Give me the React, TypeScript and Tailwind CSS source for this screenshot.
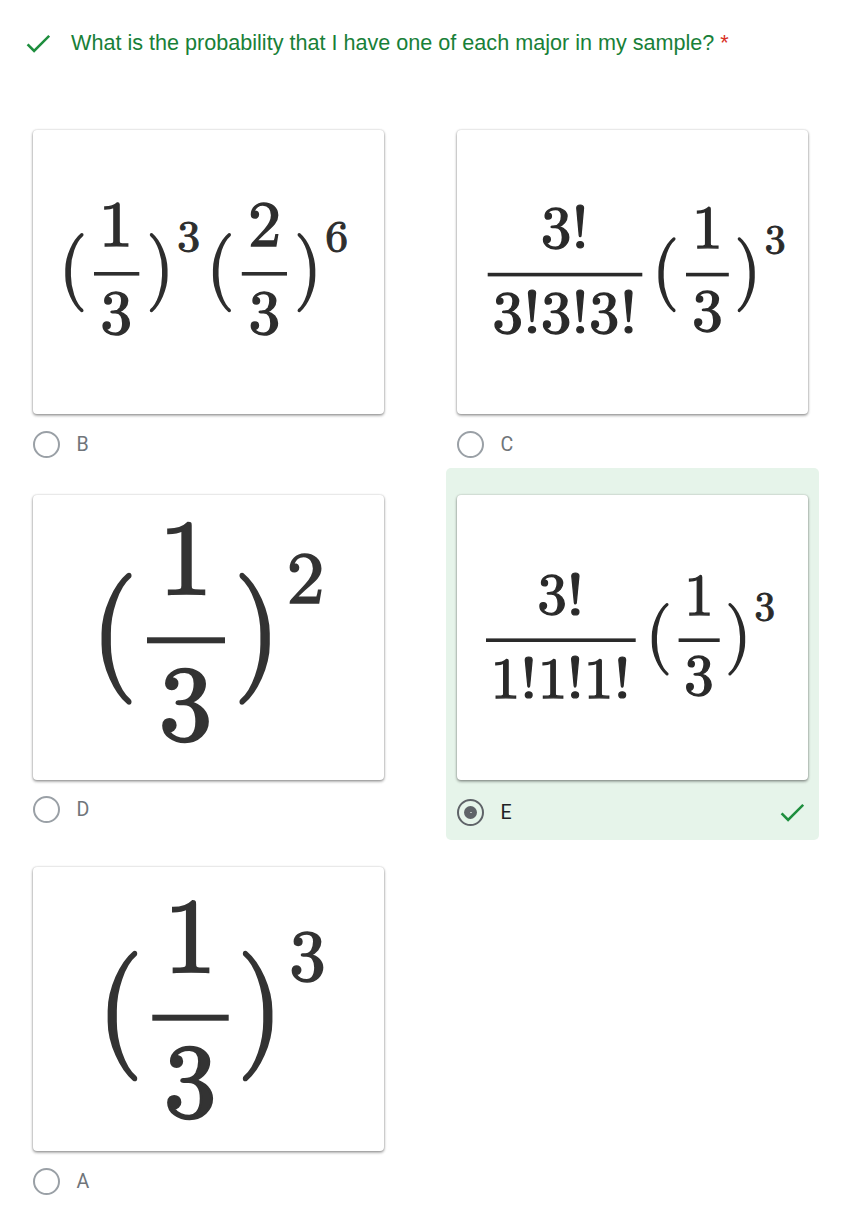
import React from "react";

type Metrics = [number, number, number, number];
type Mark = [string, number, number, number, number];

// Ink bounds of each character at a font size of 1000: left, descent, right, ascent.
const INK: Record<string, Metrics> = {
  "1": [87, 0, 421, 666],
  "2": [50, 0, 449, 666],
  "3": [42, -22, 457, 666],
  "6": [42, -22, 456, 666],
  "!": [84, 0, 194, 716],
  "(": [99, -249, 332, 749],
  ")": [56, -249, 289, 749],
};

// Outline weight of each character, as a share of its height.
const STROKE: Record<string, number> = { "1": 0.032, "2": 0.034, "3": 0.034, "6": 0.034, "!": 0.028, "(": 0.024, ")": 0.024 };

function Glyph({ mark, color }: { mark: Mark; color: string }) {
  const [ch, x0, y0, x1, y1] = mark;
  const [l, b, r, t] = INK[ch];
  const sw = (y1 - y0) * STROKE[ch];
  const sx = (x1 - x0 - sw) / (r - l);
  const sy = (y1 - y0 - sw) / (t - b);
  const tx = x0 + sw / 2 - l * sx;
  const ty = y0 + sw / 2 + t * sy;
  return (
    <text
      transform={`translate(${tx} ${ty}) scale(${sx * 10} ${sy * 10})`}
      fontSize={100}
      fill={color}
      stroke={color}
      strokeWidth={sw}
      vectorEffect="non-scaling-stroke"
    >
      {ch}
    </text>
  );
}

function Formula({ box, marks, color }: { box: string; marks: Mark[]; color: string }) {
  return (
    <svg viewBox={box} className="block h-full w-full font-['Latin_Modern_Math','Liberation_Serif',serif]">
      {marks.map((m, i) =>
        m[0] === "bar" ? (
          <rect key={i} x={m[1]} y={m[2]} width={m[3] - m[1]} height={m[4] - m[2]} fill={color} />
        ) : (
          <Glyph key={i} mark={m} color={color} />
        ),
      )}
    </svg>
  );
}

function Check() {
  return (
    <svg viewBox="0 0 24 19" className="block h-[19px] w-6 shrink-0">
      <path d="M1.6 10.3 L8.1 16.8 L23.2 1.8" fill="none" stroke="#1e8e3e" strokeWidth="2.6" />
    </svg>
  );
}

function Radio({ selected }: { selected?: boolean }) {
  return (
    <span
      className={
        selected
          ? "flex size-[27px] items-center justify-center rounded-full border-2 border-[#5f6368]"
          : "flex size-[27px] items-center justify-center rounded-full border-2 border-[#9aa0a6]"
      }
    >
      {selected && (
        <span className="flex size-[13px] items-center justify-center rounded-full bg-[#5f6368]">
          <span className="h-px w-0.5 bg-[#b4bbb9]" />
        </span>
      )}
    </span>
  );
}

interface OptionProps {
  label: string;
  box: string;
  marks: Mark[];
  color: string;
  tall?: boolean;
  selected?: boolean;
}

function Option({ label, box, marks, color, tall, selected }: OptionProps) {
  return (
    <div className={selected ? "rounded-[5px] bg-[#e6f4ea] px-[11px] pt-[27px]" : "px-[11px] pt-[27px]"}>
      <div
        className={
          (tall ? "h-[285px]" : "h-[284px]") +
          " w-[351px] rounded-[4px] bg-white shadow-[0_1px_3px_0_rgba(0,0,0,0.32),0_0_2px_0_rgba(0,0,0,0.16),0_2px_3px_0_rgba(0,0,0,0.16)]"
        }
      >
        <Formula box={box} marks={marks} color={color} />
      </div>
      <div className={selected ? "flex items-center pt-[19px]" : tall ? "flex items-center pt-4" : "flex items-center pt-[17px]"}>
        <Radio selected={selected} />
        <span
          className={
            selected
              ? "ml-[16.5px] grow font-[Roboto,sans-serif] text-[19.6px] leading-[27px] text-[#202124]"
              : "ml-[16.5px] grow font-[Roboto,sans-serif] text-[19.6px] leading-[27px] text-[#70757a]"
          }
        >
          {label}
        </span>
        {selected && (
          <span className="mr-1">
            <Check />
          </span>
        )}
      </div>
    </div>
  );
}

const OPTIONS: OptionProps[] = [
  {
    label: "B",
    box: "33 130 351 284",
    color: "#2e2e2e",
    marks: [
      ["(", 65, 233.3, 83.5, 312.7],
      ["1", 104, 202.3, 128.5, 247],
      ["bar", 94, 272, 139.3, 275.6],
      ["3", 102.3, 291, 130, 336.3],
      [")", 149.7, 233.3, 167.7, 312.7],
      ["3", 178.7, 221, 198.7, 252.3],
      ["(", 212.7, 233.3, 231, 312.7],
      ["2", 250.7, 202.3, 278.3, 247],
      ["bar", 241.8, 272, 287, 275.6],
      ["3", 250.7, 291, 278.3, 336.3],
      [")", 297.3, 233.3, 315.3, 312.7],
      ["6", 326.7, 221, 346.7, 252.3],
    ],
  },
  {
    label: "C",
    box: "457 130 351 284",
    color: "#2a2a2a",
    marks: [
      ["3", 542.7, 207, 569.3, 250],
      ["!", 576, 204, 584.3, 248.7],
      ["bar", 487.7, 272.8, 642.3, 276.4],
      ["3", 494.3, 292.3, 521, 335.3],
      ["!", 527.7, 289.3, 536.3, 334],
      ["3", 542.7, 292.3, 569.3, 335.3],
      ["!", 576, 289.3, 584.3, 334],
      ["3", 591, 292.3, 617.3, 335.3],
      ["!", 624.3, 289.3, 632.7, 334],
      ["(", 658.3, 236.7, 675.7, 311.7],
      ["1", 696.7, 207, 718.7, 249],
      ["bar", 686, 272.8, 728.8, 276.4],
      ["3", 694, 291, 720.7, 333.3],
      [")", 737.7, 236.7, 755, 311.7],
      ["3", 766, 225, 784.3, 254.3],
    ],
  },
  {
    label: "D",
    box: "33 495 351 285",
    color: "#333333",
    tall: true,
    marks: [
      ["(", 101.3, 573, 131.7, 705],
      ["1", 167, 521, 205.5, 594.7],
      ["bar", 147, 637.3, 225, 643.3],
      ["3", 162.3, 668.3, 209, 744],
      [")", 239.3, 573, 270, 705],
      ["2", 289.7, 553.3, 321.5, 604],
    ],
  },
  {
    label: "E",
    box: "457 495 351 285",
    color: "#2a2a2a",
    tall: true,
    selected: true,
    marks: [
      ["3", 539.3, 575, 565, 616.3],
      ["!", 571, 572.3, 579.6, 615.3],
      ["bar", 486, 638.4, 635.7, 642],
      ["1", 495, 658.3, 516.3, 698.4],
      ["!", 524.7, 655.7, 533, 698.4],
      ["1", 542.3, 658.3, 563.5, 698.4],
      ["!", 571, 655.7, 579.4, 698.4],
      ["1", 588.3, 658.3, 609.5, 698.4],
      ["!", 618.2, 655.7, 626.5, 698.4],
      ["(", 651.7, 603.3, 668.7, 676],
      ["1", 688.7, 575, 709.8, 615.7],
      ["bar", 678.6, 638.4, 719.7, 642],
      ["3", 686, 655.3, 711.8, 696.7],
      [")", 728.3, 603.3, 745.3, 676],
      ["3", 755.7, 592.3, 773.7, 621.3],
    ],
  },
  {
    label: "A",
    box: "33 867 351 284",
    color: "#333333",
    marks: [
      ["(", 107.3, 950.7, 137.3, 1081.3],
      ["1", 171.7, 899.7, 209.5, 972.7],
      ["bar", 152.3, 1014.7, 228.7, 1020.7],
      ["3", 167, 1045, 213, 1120.3],
      [")", 242.7, 950.7, 272.7, 1081.3],
      ["3", 291.7, 931.3, 323.4, 982.7],
    ],
  },
];

export default function App() {
  return (
    <main className="h-[1218px] w-[842px] overflow-hidden bg-white">
      <header className="flex h-[103px] items-start pl-[26px] pt-[30px]">
        <span className="pt-1">
          <Check />
        </span>
        <h1 className="ml-[21px] whitespace-nowrap font-['Liberation_Sans',sans-serif] text-[21.6px] leading-[26px] text-[#188038]">
          What is the probability that I have one of each major in my sample? <span className="text-[#d93025]">*</span>
        </h1>
      </header>
      <div className="grid grid-cols-[373px_373px] grid-rows-[365px_372px_372px] gap-x-[51px] pl-[22px]">
        {OPTIONS.map((o) => (
          <Option key={o.label} {...o} />
        ))}
      </div>
    </main>
  );
}
